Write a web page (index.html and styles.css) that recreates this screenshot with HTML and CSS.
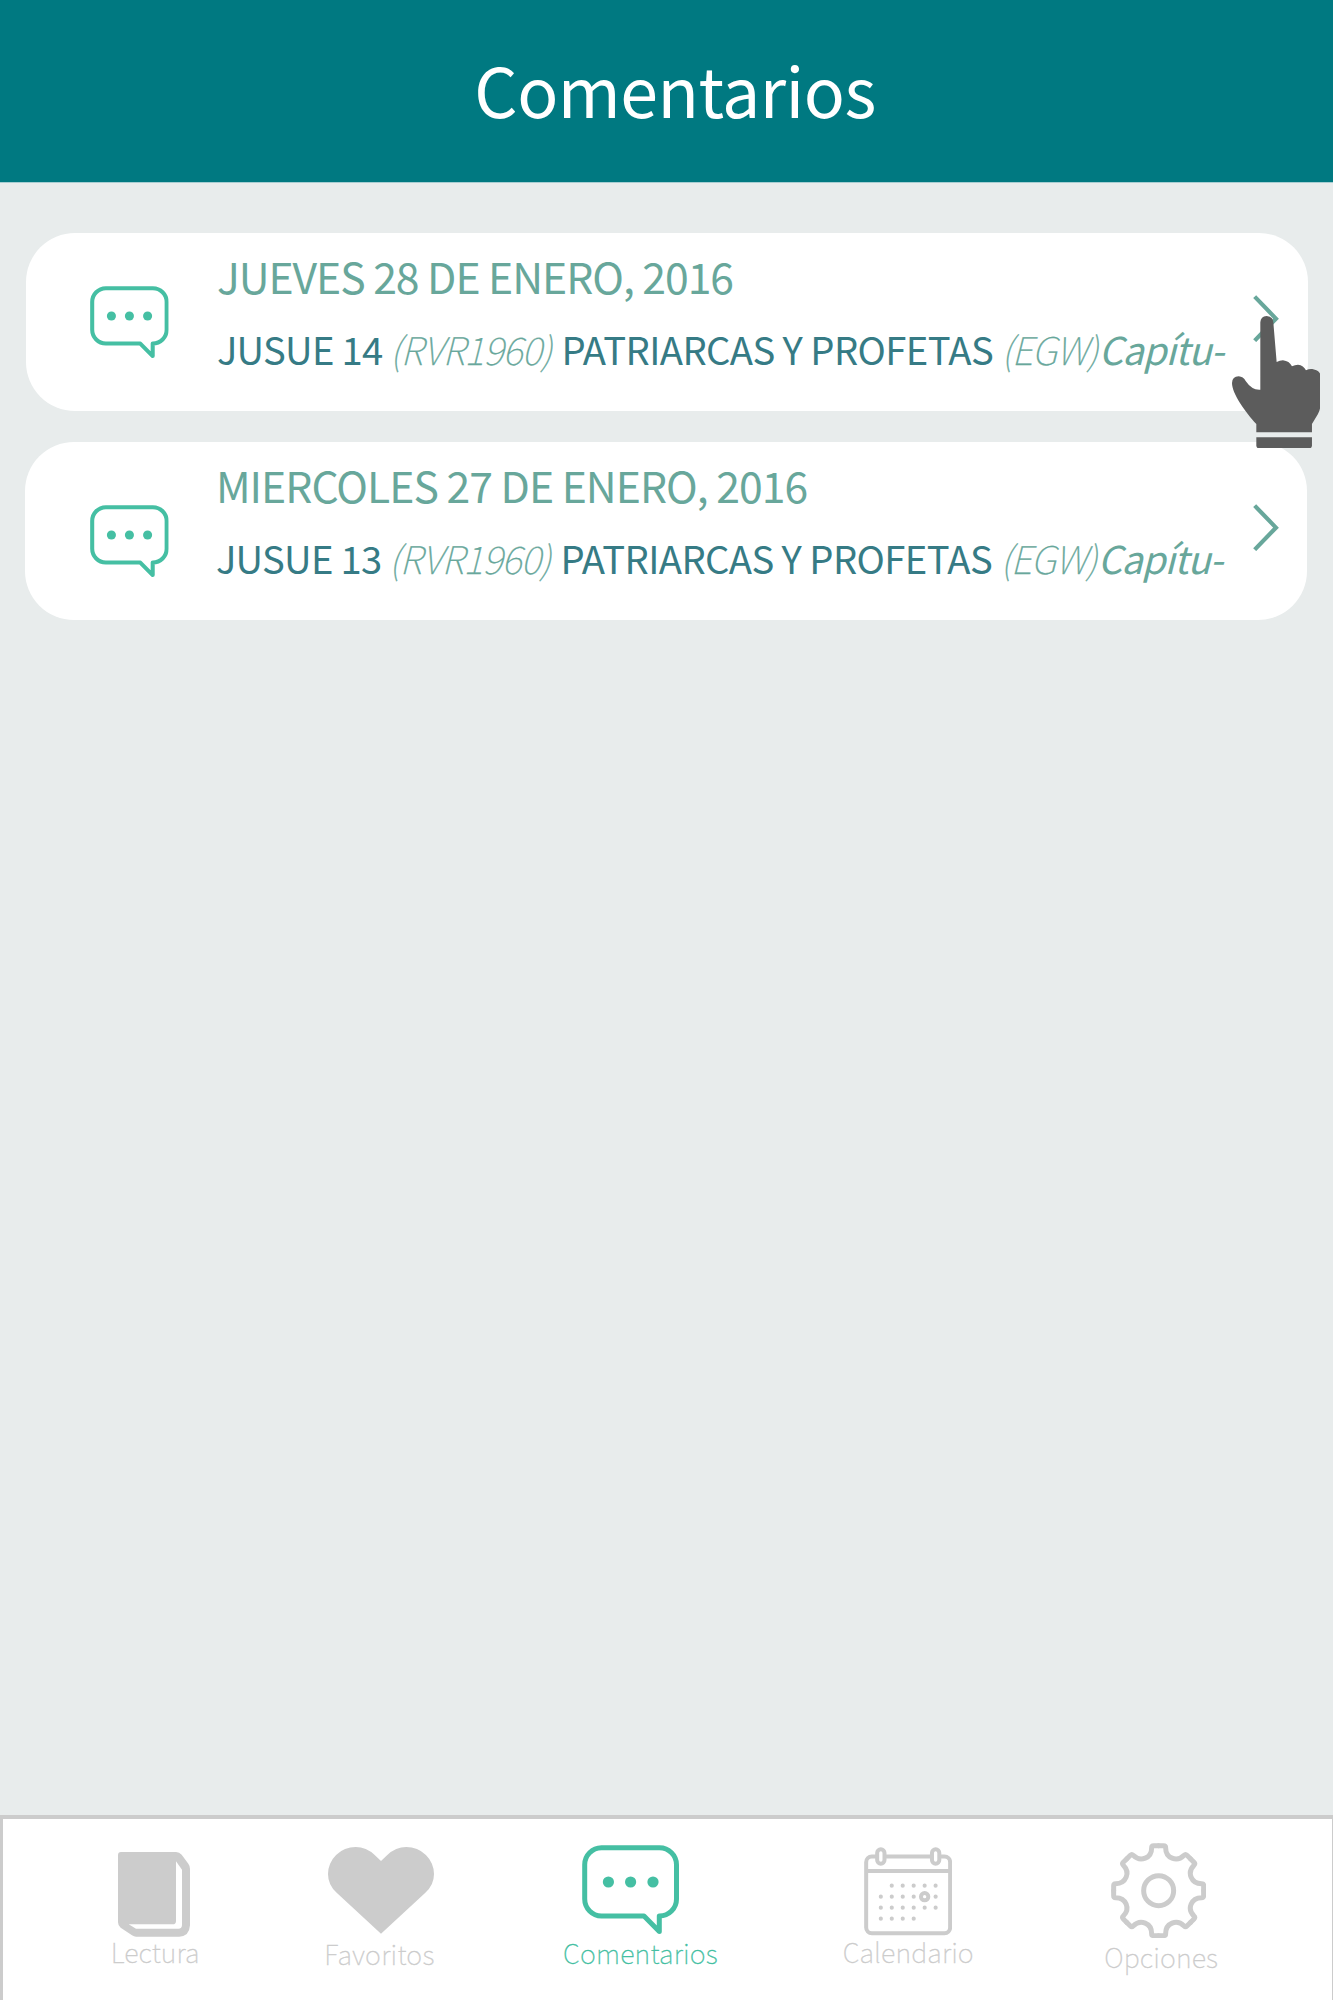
FILE: index.html
```html
<!DOCTYPE html>
<html lang="es">
<head>
<meta charset="utf-8">
<title>Comentarios</title>
<link rel="stylesheet" href="styles.css">
</head>
<body>
<svg class="defs" width="0" height="0" aria-hidden="true">
  <defs>
    <symbol id="bubble" viewBox="0 0 97 90">
      <path d="M19.5 2.7H77.5A17 17 0 0 1 94.5 19.7V54A17 17 0 0 1 77.5 71H77.3V86.4L62 71H19.5A17 17 0 0 1 2.7 54V19.7A17 17 0 0 1 19.5 2.7Z" fill="none" stroke="currentColor" stroke-width="5" stroke-linejoin="round"/>
      <circle cx="26.4" cy="37" r="5.6" fill="currentColor"/><circle cx="48.6" cy="37" r="5.6" fill="currentColor"/><circle cx="71" cy="37" r="5.6" fill="currentColor"/>
    </symbol>
    <symbol id="chevron" viewBox="0 0 78 142">
      <path d="M5 5L69 71L5 137" fill="none" stroke="currentColor" stroke-width="12.500"/>
    </symbol>
    <path id="tooth" d="M0 -135H15Q21 -135 21 -129C21 -113 29.5 -102 40.5 -97.5C51.3 -93 65.1 -94.7 76.4 -106.1Q80.6 -110.3 84.9 -106.1L95.5 -95.5"/>
  </defs>
</svg>
<div class="app">
  <header class="header"><h1 class="title">Comentarios</h1></header>
  <main class="list">
    <article class="card">
      <svg class="card-icon"><use href="#bubble"/></svg>
      <div class="card-body">
        <h2 class="date">JUEVES 28 DE ENERO, 2016</h2>
        <p class="reading"><span class="book">JUSUE 14</span><span class="version">(RVR1960)</span><span class="work">PATRIARCAS Y PROFETAS</span><span class="author">(EGW)</span><span class="chapter">Capítu-</span></p>
      </div>
      <svg class="chevron"><use href="#chevron"/></svg>
      <svg class="pointer" viewBox="695 317 265 397">
        <path d="M780 538V336Q781 318 799 317Q817 318 819 336L829 455Q838 450 848 450Q867 452 875 468Q884 463 893 463Q910 465 917 480Q926 475 936 476Q954 479 960 491V588Q959 600 953 611L935 641V666H768V641C735 605 695 550 695 518Q696 498 715 498Q729 499 736 512Q755 540 780 538Z"/>
        <path d="M768 681H935V706Q935 714 927 714H776Q768 714 768 706Z"/>
      </svg>
    </article>
    <article class="card card-second">
      <svg class="card-icon"><use href="#bubble"/></svg>
      <div class="card-body">
        <h2 class="date">MIERCOLES 27 DE ENERO, 2016</h2>
        <p class="reading"><span class="book">JUSUE 13</span><span class="version">(RVR1960)</span><span class="work">PATRIARCAS Y PROFETAS</span><span class="author">(EGW)</span><span class="chapter">Capítu-</span></p>
      </div>
      <svg class="chevron"><use href="#chevron"/></svg>
    </article>
  </main>
  <nav class="tabs">
    <a class="tab tab-lectura">
      <svg class="icon" viewBox="354 155 216 254"><path fill="currentColor" fill-rule="evenodd" d="M363 155H528Q538 155 545 163L565 190Q570 197 570 205V375Q568 408 538 409H408Q402 409 396 405L362 382Q354 376 354 366V164Q354 155 363 155ZM528 183L546 208V374Q546 385 535 385H408L386 372H518Q528 372 528 362Z"/></svg>
      <span class="label">Lectura</span>
    </a>
    <a class="tab tab-favoritos">
      <svg class="icon" viewBox="982 141 318 260"><path fill="currentColor" d="M1141 183L1122 165Q1097 141 1065 141A83 81 0 0 0 982 222Q982 255 1008 278L1141 401L1274 278Q1300 255 1300 222A83 81 0 0 0 1217 141Q1185 141 1160 165Z"/></svg>
      <span class="label">Favoritos</span>
    </a>
    <a class="tab tab-comentarios">
      <svg class="icon"><use href="#bubble"/></svg>
      <span class="label">Comentarios</span>
    </a>
    <a class="tab tab-calendario">
      <svg class="icon" viewBox="132 140 265 266">
        <g fill="none" stroke="currentColor" stroke-width="12">
          <rect x="138.500" y="168.500" width="252" height="230" rx="17"/>
          <path d="M138 212H391"/>
          <rect x="171.500" y="147" width="22" height="43" rx="11" fill="#fff"/>
          <rect x="336" y="147" width="22" height="43" rx="11" fill="#fff"/>
          <circle cx="314" cy="289" r="11"/>
        </g>
        <g fill="none" stroke="currentColor" stroke-width="12.500" stroke-linecap="round">
          <path d="M215.300 256H348" stroke-dasharray="0 32.900"/>
          <path d="M182.500 289H282" stroke-dasharray="0 32.900"/>
          <path d="M347 289h.01"/>
          <path d="M182.500 322H348" stroke-dasharray="0 32.900"/>
          <path d="M182.500 355H282" stroke-dasharray="0 32.900"/>
        </g>
      </svg>
      <span class="label">Calendario</span>
    </a>
    <a class="tab tab-opciones">
      <svg class="icon" viewBox="-143 -143 286 286">
        <g fill="none" stroke="currentColor" stroke-width="15" stroke-linecap="round">
          <circle r="45"/>
          <use href="#tooth"/><use href="#tooth" transform="rotate(45)"/><use href="#tooth" transform="rotate(90)"/><use href="#tooth" transform="rotate(135)"/><use href="#tooth" transform="rotate(180)"/><use href="#tooth" transform="rotate(225)"/><use href="#tooth" transform="rotate(270)"/><use href="#tooth" transform="rotate(315)"/>
        </g>
      </svg>
      <span class="label">Opciones</span>
    </a>
  </nav>
</div>
</body>
</html>
```
FILE: styles.css
```css
* { box-sizing: border-box; }

body {
  margin: 0;
  background: #e8ecec;
  font-family: "Noto Sans CJK SC", "Source Sans Pro", "Noto Sans", sans-serif;
}

.defs { position: absolute; }

.app {
  display: flex;
  flex-direction: column;
  width: 1333px;
  height: 2000px;
  overflow: hidden;
}

.header {
  height: 183px;
  background: #007981;
  border-bottom: 1px solid #a8ced2;
  padding-left: 17px;
  text-align: center;
}

.title {
  margin: 0;
  color: #fff;
  font-size: 68px;
  font-weight: 400;
  line-height: 177px;
  letter-spacing: -0.520px;
}

.list {
  flex: 1;
  display: flex;
  flex-direction: column;
  gap: 31px;
  padding: 50px 26px 0;
}

.card {
  position: relative;
  display: flex;
  align-items: flex-start;
  height: 178px;
  margin-right: -0.500px;
  border-radius: 49px;
  background: #fff;
}

.card-second { margin: 0 0 0 -1px; }

.card-icon {
  flex: none;
  width: 78.700px;
  height: 73px;
  margin: 53.400px 0 0 64.200px;
  color: #45bfa3;
}

.card-second .card-icon { margin: 62.700px 0 0 65.200px; }

.card-body {
  width: 1030px;
  margin-left: 48px;
  white-space: nowrap;
}

.card-second .card-body { margin: 0 1px 0 47px; }

.date, .reading { margin: 0; font-weight: 400; }

.date {
  color: #68a79b;
  font-size: 42.700px;
  line-height: 85px;
  letter-spacing: -1.020px;
}

.card-second .date { letter-spacing: -0.970px; }

.reading {
  display: flex;
  color: #68a79b;
  font-size: 38.200px;
  line-height: 62.600px;
}

.book { color: #367b85; letter-spacing: -0.700px; }
.version, .author { font-style: italic; font-weight: 100; -webkit-text-stroke: 0.300px; }
.version { margin-left: 7.200px; letter-spacing: -0.750px; }
.work { margin-left: 9.900px; color: #367b85; letter-spacing: -0.580px; }
.author { margin-left: 8px; letter-spacing: -1.100px; }
.chapter { margin-left: 1.500px; font-style: italic; letter-spacing: -0.950px; }

.chevron {
  flex: none;
  width: 26px;
  height: 47.300px;
  margin: 62px 0 0 6px;
  color: #68a79b;
}

.pointer {
  position: absolute;
  z-index: 1;
  left: 1205.700px;
  top: 82.700px;
  width: 88.300px;
  height: 132.300px;
  fill: #5c5c5c;
}

.tabs {
  display: flex;
  height: 185px;
  border: solid #ccc;
  border-width: 4px 1px 0 3px;
  background: #fff;
  color: #ccc;
}

.tab {
  flex: none;
  display: flex;
  flex-direction: column;
  align-items: center;
}

.icon { flex: none; }

.label {
  font-size: 27px;
  font-weight: 100;
  line-height: 30px;
  letter-spacing: 0.100px;
  -webkit-text-stroke: 0.300px;
}

.tab-comentarios { color: #45bfa3; }

.tab-lectura { width: 302.400px; padding-top: 33px; }
.tab-lectura .icon { width: 72px; height: 84.700px; }
.tab-lectura .label { margin: 0.700px 0 0 2px; }
.tab-favoritos { width: 150px; padding-top: 28px; }
.tab-favoritos .icon { width: 106px; height: 86.700px; margin-left: 1px; }
.tab-favoritos .label { margin: 5.500px 2px 0 0; letter-spacing: 0.250px; }
.tab-comentarios { width: 350.200px; padding-top: 25.700px; }
.tab-comentarios .icon { width: 97px; height: 90px; }
.tab-comentarios .label { margin: 3.300px 0 0 20px; letter-spacing: 0.200px; }
.tab-calendario { width: 205.400px; padding-top: 28px; }
.tab-calendario .icon { width: 88.300px; height: 88.700px; }
.tab-calendario .label { margin-top: 1.500px; }
.tab-opciones { width: 295.400px; padding-top: 24px; }
.tab-opciones .icon { width: 95.300px; height: 95.300px; }
.tab-opciones .label { margin: 3.300px 0 0 5px; }
```
